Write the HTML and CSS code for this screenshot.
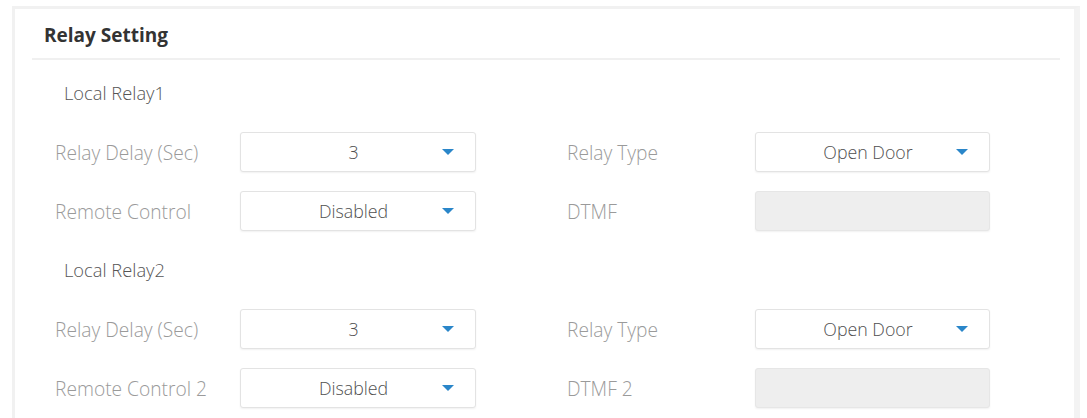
FILE: index.html
```html
<!DOCTYPE html>
<html lang="en">
<head>
<meta charset="utf-8">
<title>Relay Setting</title>
<link rel="stylesheet" href="styles.css">
</head>
<body>
<div class="card">
  <div class="card-header"><span class="card-title">Relay Setting</span></div>
  <div class="card-body">
    <div class="sub-title">Local Relay1</div>
    <div class="row">
      <span class="label">Relay Delay (Sec)</span>
      <div class="select"><span class="value">3</span><span class="caret"></span></div>
      <span class="spacer"></span>
      <span class="label">Relay Type</span>
      <div class="select"><span class="value">Open Door</span><span class="caret"></span></div>
    </div>
    <div class="row">
      <span class="label">Remote Control</span>
      <div class="select"><span class="value">Disabled</span><span class="caret"></span></div>
      <span class="spacer"></span>
      <span class="label">DTMF</span>
      <div class="input disabled"></div>
    </div>
    <div class="sub-title">Local Relay2</div>
    <div class="row">
      <span class="label">Relay Delay (Sec)</span>
      <div class="select"><span class="value">3</span><span class="caret"></span></div>
      <span class="spacer"></span>
      <span class="label">Relay Type</span>
      <div class="select"><span class="value">Open Door</span><span class="caret"></span></div>
    </div>
    <div class="row">
      <span class="label">Remote Control 2</span>
      <div class="select"><span class="value">Disabled</span><span class="caret"></span></div>
      <span class="spacer"></span>
      <span class="label">DTMF 2</span>
      <div class="input disabled"></div>
    </div>
  </div>
</div>
</body>
</html>
```
FILE: styles.css
```css
html, body {
  margin: 0;
  padding: 0;
  background: #ffffff;
  overflow: hidden;
}
body {
  font-family: "Open Sans", "Noto Sans", Arial, sans-serif;
  padding: 6px 7px 0 12px;
}
.card {
  border: 3px solid #f1f1f1;
  border-right: 6px solid #f3f3f3;
  border-bottom: none;
  min-height: 420px;
  background: #fff;
}
.card-header {
  margin: 0 14px 0 17px;
  padding: 15px 0 11px 12px;
  border-bottom: 2px solid #f0f0f0;
  line-height: 22px;
}
.card-title {
  font-size: 19px;
  font-weight: 700;
  color: #333333;
}
.card-body {
  padding: 13px 0 0 40px;
  display: flex;
  flex-direction: column;
  gap: 19px;
}
.sub-title {
  height: 40px;
  line-height: 40px;
  padding-left: 9px;
  font-size: 18.3px;
  font-weight: 300;
  color: #555555;
}
.row {
  display: grid;
  grid-template-columns: 185px 236px 91px 188px 235px;
  height: 40px;
  align-items: center;
}
.label {
  font-size: 19.2px;
  font-weight: 300;
  color: #9a9a9a;
}
.select, .input {
  box-sizing: border-box;
  height: 40px;
  border: 1px solid #e3e3e3;
  border-radius: 3px;
  background: #fff;
  box-shadow: 0 1px 2px rgba(0,0,0,0.06);
  display: flex;
  align-items: center;
  position: relative;
}
.select .value {
  flex: 1;
  text-align: center;
  padding-left: 24px;
  font-size: 17.8px;
  font-weight: 300;
  color: #505050;
}
.caret {
  width: 0;
  height: 0;
  border-left: 6px solid transparent;
  border-right: 6px solid transparent;
  border-top: 6px solid #2a86c9;
  margin-right: 21px;
}
.input.disabled {
  background: #eeeeee;
  border-color: #e6e6e6;
}
```
